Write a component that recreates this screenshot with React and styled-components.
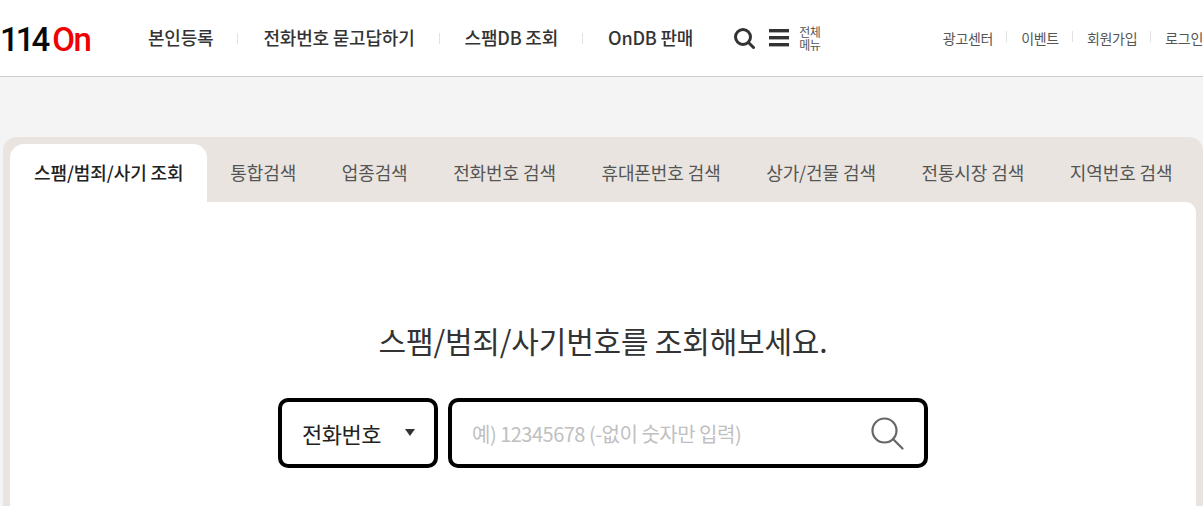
import React from 'react';
import styled, { createGlobalStyle } from 'styled-components';

const Global = createGlobalStyle`
  html, body { margin: 0; padding: 0; background: #f4f4f4; overflow: hidden; }
  body { font-family: "Noto Sans CJK KR", "Noto Sans", sans-serif; }
  * { box-sizing: border-box; }
`;
const Page = styled.div`width: 1203px; height: 506px; overflow: hidden;`;
const Header = styled.header`
  height: 77px; background: #fff; border-bottom: 1px solid #ccc;
  display: flex; align-items: center;
`;
const Logo = styled.div`
  width: 148px; display: flex; gap: 5px; align-items: center;
  font-family: Roboto, sans-serif; font-weight: 500; font-size: 33px; line-height: 1;
  margin-top: 2px;
`;
const LogoPart = styled.span`
  color: ${p => p.$red ? '#f00000' : '#0a0a0a'};
  letter-spacing: ${p => p.$red ? '-1.6px' : '-3px'};
`;
const Nav = styled.nav`display: flex; align-items: center; margin-top: -3px;`;
const NavItem = styled.a`
  font-size: 18px; font-weight: 500; color: #333; line-height: 24px; white-space: nowrap; letter-spacing: -0.2px;
  padding-right: 25px; margin-right: 25px; position: relative;
  &:not(:last-child)::after {
    content: ''; position: absolute; right: 0; top: 8px; width: 1px; height: 11px; background: #e2e2e2;
  }
  &:last-child { margin-right: 0; padding-right: 0; }
`;
const Tools = styled.div`display: flex; align-items: center; margin-left: 41px;`;
const MenuIcon = styled.svg`margin-left: 14px; display: block; margin-top: -1px;`;
const MenuLabel = styled.div`
  margin-left: 10px; font-size: 12px; line-height: 13px; color: #555; width: 30px; letter-spacing: -0.4px;
`;
const Util = styled.div`display: flex; align-items: center; margin-left: auto;`;
const UtilItem = styled.a`
  font-size: 14px; color: #555; line-height: 18px; white-space: nowrap; letter-spacing: -0.3px;
  padding-right: 14px; margin-right: 14px; position: relative;
  &:not(:last-child)::after {
    content: ''; position: absolute; right: 0; top: 2px; width: 1px; height: 11px; background: #e2e2e2;
  }
  &:last-child { margin-right: 0; padding-right: 0; }
`;
const Panel = styled.section`
  margin: 60px 0 0 3px; width: 1200px; background: #e9e4df; border-radius: 14px 14px 0 0; padding: 7px 7px 0;
`;
const Tabs = styled.div`display: flex; height: 58px;`;
const Tab = styled.div`
  font-size: 18px; line-height: 56px; white-space: nowrap; letter-spacing: -0.1px;
  color: ${p => p.$active ? '#222' : '#555'};
  font-weight: ${p => p.$active ? 500 : 400};
  padding: 0 ${p => p.$active ? '24px' : '22.8px'};
  background: ${p => p.$active ? '#fff' : 'transparent'};
  border-radius: ${p => p.$active ? '14px 14px 0 0' : '0'};
`;
const Card = styled.div`
  background: #fff; border-radius: 0 10px 0 0; height: 304px; padding-top: 116px;
  display: flex; flex-direction: column; align-items: center;
`;
const Title = styled.h2`
  margin: 0; font-size: 30px; font-weight: 400; color: #333; line-height: 44px; white-space: nowrap;
  letter-spacing: -0.2px;
`;
const SearchRow = styled.div`display: flex; gap: 10px; margin-top: 36px;`;
const Select = styled.div`
  width: 160px; height: 70px; border: 4px solid #000; border-radius: 10px; background: #fff;
  display: flex; align-items: center; padding-left: 20px; font-size: 22px; letter-spacing: -0.5px; color: #222; position: relative;
`;
const Arrow = styled.span`
  position: absolute; right: 19px; top: 27px; width: 0; height: 0;
  border-left: 5px solid transparent; border-right: 5px solid transparent; border-top: 7px solid #333;
`;
const InputBox = styled.div`
  width: 480px; height: 70px; border: 4px solid #000; border-radius: 10px; background: #fff;
  display: flex; align-items: center; justify-content: space-between; padding: 0 20px 0 20px;
`;
const Placeholder = styled.span`font-size: 20px; color: #c0c0c0; letter-spacing: -0.5px; white-space: nowrap;`;

const nav = ['본인등록', '전화번호 묻고답하기', '스팸DB 조회', 'OnDB 판매'];
const util = ['광고센터', '이벤트', '회원가입', '로그인'];
const tabs = ['스팸/범죄/사기 조회', '통합검색', '업종검색', '전화번호 검색', '휴대폰번호 검색', '상가/건물 검색', '전통시장 검색', '지역번호 검색'];

export default function App() {
  return (
    <Page>
      <Global />
      <Header>
        <Logo><LogoPart>114</LogoPart><LogoPart $red>On</LogoPart></Logo>
        <Nav>{nav.map(n => <NavItem key={n}>{n}</NavItem>)}</Nav>
        <Tools>
          <svg width="21" height="21" viewBox="0 0 21 21" fill="none" stroke="#333" strokeWidth="3">
            <circle cx="9" cy="9" r="7.5" />
            <path d="M14.5 14.5l5 5" strokeLinecap="round" />
          </svg>
          <MenuIcon width="20" height="18" viewBox="0 0 20 18" fill="#333">
            <rect y="0" width="20" height="3.4" />
            <rect y="7" width="20" height="3.4" />
            <rect y="14" width="20" height="3.4" />
          </MenuIcon>
          <MenuLabel>전체<br />메뉴</MenuLabel>
        </Tools>
        <Util>{util.map(u => <UtilItem key={u}>{u}</UtilItem>)}</Util>
      </Header>
      <Panel>
        <Tabs>{tabs.map((t, i) => <Tab key={t} $active={i === 0}>{t}</Tab>)}</Tabs>
        <Card>
          <Title>스팸/범죄/사기번호를 조회해보세요.</Title>
          <SearchRow>
            <Select>전화번호<Arrow /></Select>
            <InputBox>
              <Placeholder>예) 12345678 (-없이 숫자만 입력)</Placeholder>
              <svg width="34" height="34" viewBox="0 0 34 34" fill="none" stroke="#666" strokeWidth="2.2">
                <circle cx="14.5" cy="14.5" r="12" />
                <path d="M23.5 23.5L32.5 32.5" strokeLinecap="round" />
              </svg>
            </InputBox>
          </SearchRow>
        </Card>
      </Panel>
    </Page>
  );
}
